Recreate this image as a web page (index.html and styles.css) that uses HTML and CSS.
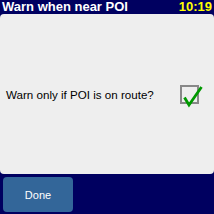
FILE: index.html
```html
<!DOCTYPE html>
<html>
<head>
<meta charset="utf-8">
<link rel="stylesheet" href="styles.css">
</head>
<body>
<div class="screen">
  <div class="header">
    <span class="title">Warn when near POI</span>
    <span class="time">10:19</span>
  </div>
  <div class="panel">
    <div class="row">
      <span class="label">Warn only if POI is on route?</span>
      <span class="checkbox">
        <svg class="check" width="23" height="23" viewBox="0 0 23 23">
          <path d="M2.5 12.5 L7 20 L19.5 2" fill="none" stroke="#009900" stroke-width="2.8" stroke-linejoin="miter" stroke-linecap="butt"/>
        </svg>
      </span>
    </div>
  </div>
  <div class="footer">
    <button class="done">Done</button>
  </div>
</div>
</body>
</html>
```
FILE: styles.css
```css
html, body {
  margin: 0;
  padding: 0;
  background: #000060;
}
.screen {
  width: 214px;
  height: 214px;
  display: flex;
  flex-direction: column;
  font-family: "Liberation Sans", Arial, sans-serif;
}
.header {
  height: 14px;
  display: flex;
  justify-content: space-between;
  align-items: center;
  padding: 0 2px 0 2px;
}
.title {
  color: #ffffff;
  font-weight: bold;
  font-size: 13px;
  line-height: 14px;
}
.time {
  color: #ffff00;
  font-weight: bold;
  font-size: 13px;
  line-height: 14px;
}
.panel {
  height: 160px;
  background: #eeeeee;
  border-radius: 4px;
  display: flex;
  align-items: center;
}
.row {
  flex: 1;
  display: flex;
  justify-content: space-between;
  align-items: center;
  padding: 0 15px 0 6px;
}
.label {
  color: #000000;
  font-size: 11.6px;
}
.checkbox {
  position: relative;
  width: 15px;
  height: 15px;
  border: 2px solid #888888;
  background: #eeeeee;
}
.check {
  position: absolute;
  left: 0px;
  top: -2px;
}
.footer {
  padding: 3px 0 0 3px;
}
.done {
  width: 70px;
  height: 35px;
  background: #336699;
  border: none;
  border-radius: 4px;
  color: #ffffff;
  font-family: "Liberation Sans", Arial, sans-serif;
  font-size: 11px;
  padding: 0;
}
```
